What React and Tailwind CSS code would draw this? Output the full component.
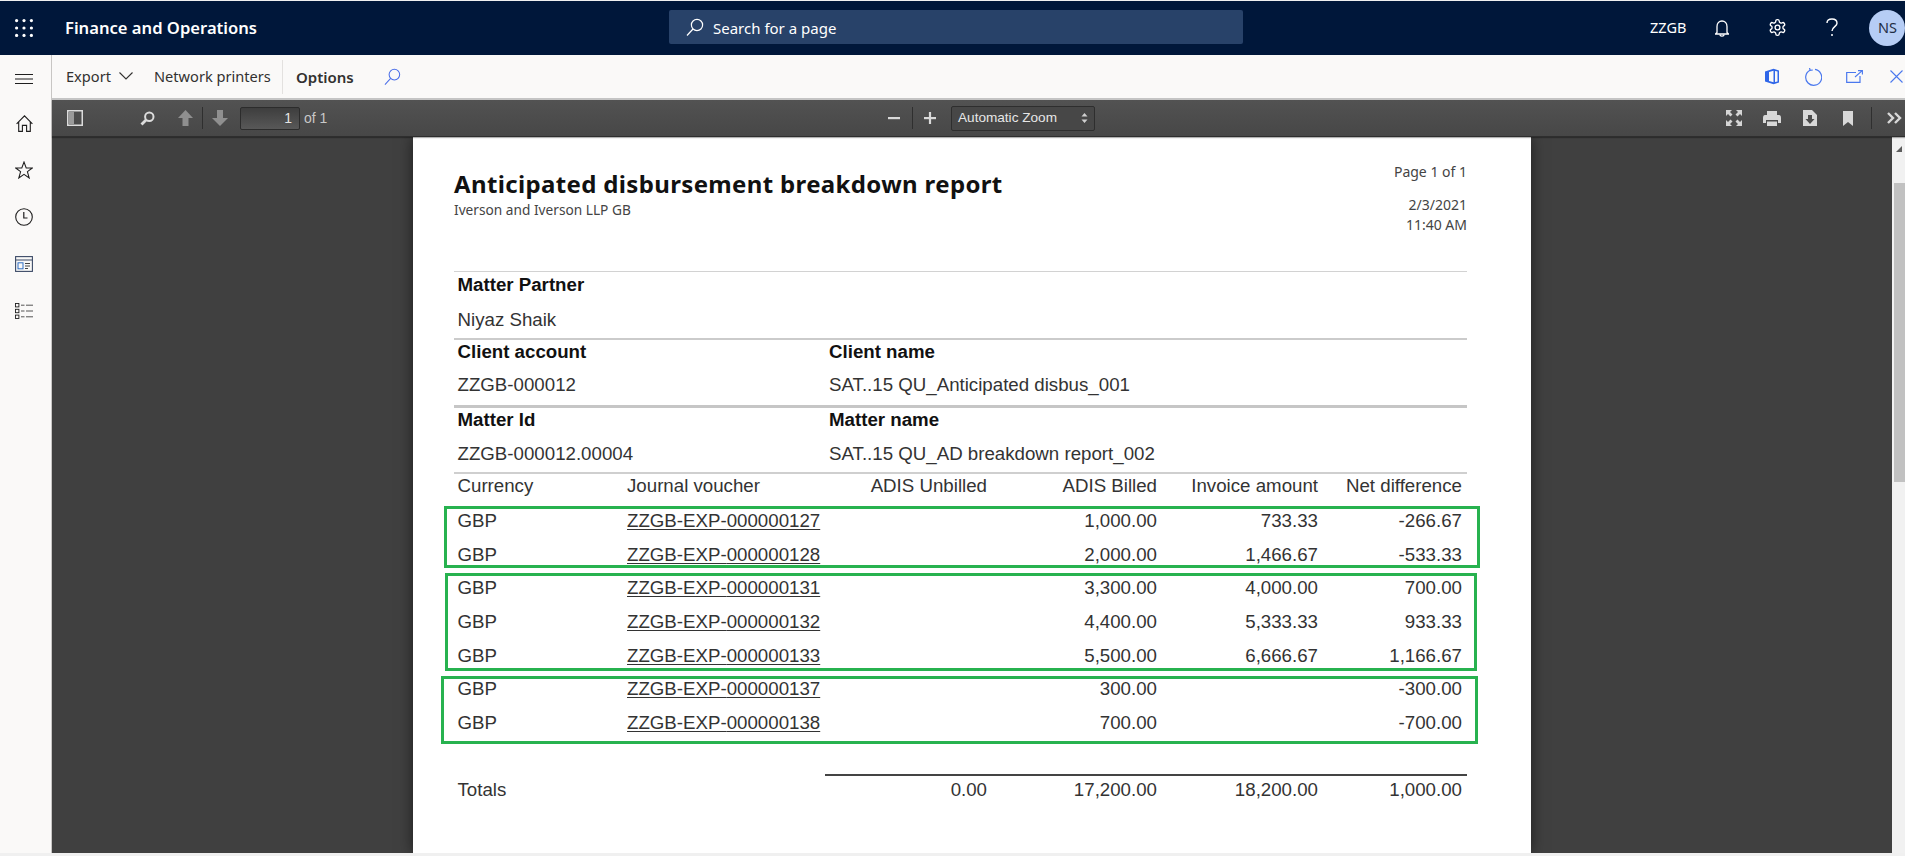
import React from "react";

const segoe = "[font-family:'Noto_Sans','Open_Sans',sans-serif]";

function Svg({ w, h, vb, className = "", children }) {
  return (
    <svg width={w} height={h} viewBox={vb || `0 0 ${w} ${h}`} fill="none" stroke="currentColor" className={"shrink-0 " + className}>
      {children}
    </svg>
  );
}

const SearchMirror = ({ w = 18, h = 18, sw = 1.3 }) => (
  <Svg w={w} h={h} vb="0 0 18 18">
    <circle cx="11" cy="7" r="5.6" strokeWidth={sw} />
    <path d="M7 11 L1 17.5" strokeWidth={sw} />
  </Svg>
);

function PdfBtn({ children, className = "" }) {
  return <div className={"shrink-0 flex items-center justify-center text-[#d9d9d9] " + className}>{children}</div>;
}

const Sep = ({ className = "" }) => <div className={"w-px h-[22px] bg-[#2f2f2f] shrink-0 " + className} />;

const rows = [
  ["000000127", "1,000.00", "733.33", "-266.67"],
  ["000000128", "2,000.00", "1,466.67", "-533.33"],
  ["000000131", "3,300.00", "4,000.00", "700.00"],
  ["000000132", "4,400.00", "5,333.33", "933.33"],
  ["000000133", "5,500.00", "6,666.67", "1,166.67"],
  ["000000137", "300.00", "", "-300.00"],
  ["000000138", "700.00", "", "-700.00"],
];

const Cols = ({ children, className = "" }) => (
  <div className={"grid grid-cols-[169.5px_200px_160px_170px_161px_144px] items-center pl-[3.5px] pr-[4.7px] " + className}>{children}</div>
);

function InfoBlock({ a, b, c, d, line, labelH }) {
  return (
    <div className={"h-[67.3px] " + line}>
      <div className={"grid grid-cols-[371.5px_1fr] pl-[3.5px] items-center font-bold text-[#111] " + labelH}>
        <div>{a}</div>
        <div>{b}</div>
      </div>
      <div className="grid grid-cols-[371.5px_1fr] pl-[3.5px] h-[41px] items-center text-[#333]">
        <div>{c}</div>
        <div>{d}</div>
      </div>
    </div>
  );
}

function Report() {
  return (
    <div className="relative w-[1118px] h-[716px] bg-white shadow-[0_0_14px_rgba(0,0,0,0.55)] pl-[41px] pr-[64px] shrink-0">
      <div className={"flex justify-between h-[133.5px] " + segoe}>
        <div className="pt-[31px]">
          <div className="text-[24px] leading-[32px] font-bold text-[#111] tracking-[0.35px]">Anticipated disbursement breakdown report</div>
          <div className="text-[13.7px] leading-[18px] pt-[1px] text-[#444]">Iverson and Iverson LLP GB</div>
        </div>
        <div className="text-right text-[14px] leading-[20px] text-[#444] pt-[25px]">
          <div>Page 1 of 1</div>
          <div className="mt-[13px]">2/3/2021</div>
          <div>11:40 AM</div>
        </div>
      </div>

      <div className="text-[18.7px] font-['Liberation_Sans',Arial,sans-serif] leading-none">
        <InfoBlock line="border-t border-[#d2d2d2]" labelH="h-[28.5px]" a="Matter Partner" b="" c="Niyaz Shaik" />
        <InfoBlock line="border-t-2 border-[#cbcbcb]" labelH="h-[25.5px]" a="Client account" b="Client name" c="ZZGB-000012" d="SAT..15 QU_Anticipated disbus_001" />
        <InfoBlock line="border-t-[3px] border-[#c6c6c6]" labelH="h-[25.5px]" a="Matter Id" b="Matter name" c="ZZGB-000012.00004" d="SAT..15 QU_AD breakdown report_002" />

        <Cols className="border-t-2 border-[#cfcfcf] h-[32px] text-[#333] items-start pt-[3px]">
          <div>Currency</div>
          <div>Journal voucher</div>
          <div className="text-right">ADIS Unbilled</div>
          <div className="text-right">ADIS Billed</div>
          <div className="text-right">Invoice amount</div>
          <div className="text-right">Net difference</div>
        </Cols>

        {rows.map((r) => (
          <Cols key={r[0]} className="h-[33.7px] text-[#333]">
            <div>GBP</div>
            <div className="underline underline-offset-2">ZZGB-EXP-{r[0]}</div>
            <div />
            <div className="text-right">{r[1]}</div>
            <div className="text-right">{r[2]}</div>
            <div className="text-right">{r[3]}</div>
          </Cols>
        ))}

        <div className="ml-[370.6px] mt-[34px] h-[2px] bg-[#444]" />
        <Cols className="h-[28px] text-[#333]">
          <div>Totals</div>
          <div />
          <div className="text-right">0.00</div>
          <div className="text-right">17,200.00</div>
          <div className="text-right">18,200.00</div>
          <div className="text-right">1,000.00</div>
        </Cols>
      </div>

      <div className="absolute left-[30.6px] top-[369px] w-[1036.4px] h-[62px] border-[3px] border-[#27b24f]" />
      <div className="absolute left-[32px] top-[436.3px] w-[1032px] h-[97.7px] border-[3px] border-[#27b24f]" />
      <div className="absolute left-[28px] top-[539.3px] w-[1037px] h-[67.7px] border-[3px] border-[#27b24f]" />
    </div>
  );
}

function RailSlot({ children, className = "" }) {
  return <div className={"h-[47px] w-full flex items-center justify-center shrink-0 " + className}>{children}</div>;
}

export default function App() {
  return (
    <div className="w-[1914px] h-[856px] bg-white overflow-hidden">
      <div className="w-[1905px] h-full pt-px flex flex-col bg-[#f0f0f0] overflow-hidden">
        {/* Top bar */}
        <header className={"h-[54px] shrink-0 bg-[#00173a] flex items-center text-white " + segoe}>
          <svg width="18" height="18" viewBox="0 0 18 18" fill="currentColor" className="ml-[15px] shrink-0 -mt-[1px]">
            {[1.6, 9, 16.4].flatMap((y) => [1.6, 9, 16.4].map((x) => <circle key={x + "-" + y} cx={x} cy={y} r="1.6" />))}
          </svg>
          <div className="w-[604px] ml-[32px] shrink-0 text-[16.6px] font-semibold">Finance and Operations</div>
          <div className="w-[574px] h-[34px] shrink-0 bg-[#284269] rounded-[2px] flex items-center pl-[17px] gap-[9px] text-[15px] -mt-[2px]">
            <SearchMirror w={18} h={18} sw={1.2} />
            <span className="pt-[2px]">Search for a page</span>
          </div>
          <div className="ml-[407px] text-[14.5px] w-[38px]">ZZGB</div>
          <Svg w={14} h={17} vb="0 0 14 17" className="ml-[29px]">
            <path d="M2 12.5 V6.5 C2 3.3 4.2 1 7 1 C9.8 1 12 3.3 12 6.5 V12.5 L13.5 14 H0.5 Z" strokeWidth="1.3" />
            <path d="M5 14.5 C5 16.6 9 16.6 9 14.5" strokeWidth="1.3" />
          </Svg>
          <Svg w={19} h={19} vb="0 0 24 24" className="ml-[39px] -mt-[1px]">
            <path d="M12.22 2h-.44a2 2 0 0 0-2 2v.18a2 2 0 0 1-1 1.73l-.43.25a2 2 0 0 1-2 0l-.15-.08a2 2 0 0 0-2.73.73l-.22.38a2 2 0 0 0 .73 2.73l.15.1a2 2 0 0 1 1 1.72v.51a2 2 0 0 1-1 1.74l-.15.09a2 2 0 0 0-.73 2.73l.22.38a2 2 0 0 0 2.73.73l.15-.08a2 2 0 0 1 2 0l.43.25a2 2 0 0 1 1 1.73V20a2 2 0 0 0 2 2h.44a2 2 0 0 0 2-2v-.18a2 2 0 0 1 1-1.73l.43-.25a2 2 0 0 1 2 0l.15.08a2 2 0 0 0 2.73-.73l.22-.39a2 2 0 0 0-.73-2.73l-.15-.08a2 2 0 0 1-1-1.74v-.5a2 2 0 0 1 1-1.74l.15-.09a2 2 0 0 0 .73-2.73l-.22-.38a2 2 0 0 0-2.73-.73l-.15.08a2 2 0 0 1-2 0l-.43-.25a2 2 0 0 1-1-1.73V4a2 2 0 0 0-2-2z" strokeWidth="1.7" />
            <circle cx="12" cy="12" r="3" strokeWidth="1.7" />
          </Svg>
          <Svg w={12} h={19} vb="0 0 12 19" className="ml-[39px] -mt-[1px]">
            <path d="M1 5 C1 2.4 3 1 6 1 C9 1 11 2.8 11 5.2 C11 8.5 6 8.8 6 13" strokeWidth="1.4" />
            <circle cx="6" cy="17" r="1" fill="currentColor" stroke="none" />
          </Svg>
          <div className="ml-[31px] w-[36px] h-[36px] shrink-0 rounded-full bg-[#b6cdf5] text-[#1f2d44] text-[14.5px] flex items-center justify-center">NS</div>
        </header>

        <div className="flex-1 flex min-h-0">
          {/* Nav rail */}
          <nav className="w-[52px] shrink-0 bg-[#faf9f8] border-r border-[#c8c6c4] text-[#1f1f1f] flex flex-col items-center pr-[3px]">
            <RailSlot>
              <Svg w={18} h={10} vb="0 0 18 10"><path d="M0 0.5 H18 M0 5 H18 M0 9.5 H18" strokeWidth="1" /></Svg>
            </RailSlot>
            <RailSlot className="-mt-[2px]">
              <Svg w={17} h={17} vb="0 0 17 17">
                <path d="M0.6 8.8 L8.5 0.8 L16.4 8.8 M2.7 7 V16.4 H6.4 V10.4 H10.6 V16.4 H14.3 V7" strokeWidth="1.1" />
              </Svg>
            </RailSlot>
            <RailSlot className="-mt-[1px]">
              <Svg w={18} h={18} vb="0 0 18 18">
                <path d="M9 1 L11.2 7 H17.3 L12.4 10.7 L14.2 17 L9 13.3 L3.8 17 L5.6 10.7 L0.7 7 H6.8 Z" strokeWidth="1.05" />
              </Svg>
            </RailSlot>
            <RailSlot>
              <Svg w={18} h={18} vb="0 0 18 18">
                <circle cx="9" cy="9" r="8.3" strokeWidth="1.1" />
                <path d="M8.8 4 V10 H12.5" strokeWidth="1.2" />
              </Svg>
            </RailSlot>
            <RailSlot>
              <Svg w={18} h={16} vb="0 0 18 16">
                <rect x="0.6" y="0.6" width="16.8" height="14.8" strokeWidth="1.1" stroke="#3b4a66" />
                <path d="M0.6 4 H17.4" strokeWidth="1" stroke="#3b4a66" />
                <rect x="3" y="6.8" width="5" height="6" strokeWidth="1" stroke="#2f6fc4" />
                <path d="M10 7.5 H15 M10 10 H15 M10 12.5 H13" strokeWidth="1" stroke="#444" />
              </Svg>
            </RailSlot>
            <RailSlot>
              <Svg w={18} h={16} vb="0 0 18 16">
                <rect x="0.5" y="0.5" width="3.4" height="3.4" strokeWidth="0.9" />
                <rect x="0.5" y="6.3" width="3.4" height="3.4" strokeWidth="0.9" />
                <rect x="0.5" y="12.1" width="3.4" height="3.4" strokeWidth="0.9" />
                <path d="M6 2.2 H9.5 M11 2.2 H18 M6 8 H9.5 M11 8 H18 M6 13.8 H9.5 M11 13.8 H18" strokeWidth="1" stroke="#555" />
              </Svg>
            </RailSlot>
          </nav>

          <div className="flex-1 min-w-0 flex flex-col">
            {/* Command bar */}
            <div className={"h-[45px] shrink-0 bg-[#faf9f8] flex items-center text-[#323130] text-[14.6px] border-b-2 border-[#c4c4c4] " + segoe}>
              <div className="ml-[14px] flex items-center w-[88px]">
                <span className="pt-[1px]">Export</span>
                <Svg w={14} h={8} vb="0 0 14 8" className="ml-[8px]">
                  <path d="M0.5 0.5 L7 7 L13.5 0.5" strokeWidth="1.1" />
                </Svg>
              </div>
              <span className="w-[128px] shrink-0 pt-[1px]">Network printers</span>
              <div className="w-px h-[34px] bg-[#e3e1df]" />
              <span className="ml-[13px] font-semibold w-[88px] shrink-0 pt-[1px] text-[15px]">Options</span>
              <span className="text-[#4a6ee8]"><SearchMirror w={17} h={17} sw={1.1} /></span>
              <div className="ml-auto flex items-center text-[#4a78ee] pr-[2px]">
                <Svg w={16} h={17} vb="0 0 16 17">
                  <path d="M1 3.5 L9.5 0.8 L15 2.5 V14.5 L9.5 16.2 L1 13.5 Z" fill="#2f66e8" stroke="none" />
                  <path d="M5 4 L9.5 2.8 V14.2 L5 13 Z" fill="#faf9f8" stroke="none" />
                  <path d="M11 3 L13.5 3.6 V13.4 L11 14 Z" fill="#faf9f8" stroke="none" />
                </Svg>
                <Svg w={18} h={18} vb="0 0 18 18" className="ml-[24px]">
                  <path d="M6 2.2 A8 8 0 1 0 11 1.4" strokeWidth="1.2" />
                  <path d="M5.5 0 L6.2 2.4 L8.8 2" strokeWidth="1.2" />
                </Svg>
                <Svg w={17} h={13} vb="0 0 17 13" className="ml-[24px]">
                  <path d="M10 2.5 H0.7 V12.3 H14 V6" strokeWidth="1.2" />
                  <path d="M9 7 L16 0.8 M12 0.6 H16.4 V4.5" strokeWidth="1.1" />
                </Svg>
                <Svg w={13} h={13} vb="0 0 13 13" className="ml-[27px]">
                  <path d="M0.5 0.5 L12.5 12.5 M12.5 0.5 L0.5 12.5" strokeWidth="1.1" />
                </Svg>
              </div>
            </div>

            {/* PDF viewer */}
            <main className="flex-1 flex flex-col min-h-0 font-['Liberation_Sans',Arial,sans-serif]">
              <div className="h-[37px] shrink-0 bg-linear-to-b from-[#525252] to-[#474747] border-b border-[#2e2e2e] flex items-center text-[#d9d9d9] text-[14px] shadow-[0_1px_1px_rgba(0,0,0,0.3)] relative z-10">
                <div className="w-[836px] shrink-0 flex items-center pl-[15px]">
                  <PdfBtn>
                    <svg width="16" height="16" viewBox="0 0 16 16"><rect x="0.75" y="0.75" width="14.5" height="14.5" fill="none" stroke="#dcdcdc" strokeWidth="1.5" /><rect x="2" y="2" width="5" height="12" fill="#9a9a9a" /></svg>
                  </PdfBtn>
                  <PdfBtn className="ml-[57px]">
                    <svg width="15" height="15" viewBox="0 0 15 15" fill="none" stroke="#dcdcdc"><circle cx="9.3" cy="5.7" r="4.2" strokeWidth="2" /><path d="M6 9 L1.5 13.5" strokeWidth="2.8" /></svg>
                  </PdfBtn>
                  <PdfBtn className="ml-[23px]">
                    <svg width="15" height="16" viewBox="0 0 15 16" fill="#8f8f8f"><path d="M7.5 0 L15 8 H10.5 V16 H4.5 V8 H0 Z" /></svg>
                  </PdfBtn>
                  <Sep className="ml-[9px]" />
                  <PdfBtn className="ml-[9px]">
                    <svg width="16" height="16" viewBox="0 0 16 16" fill="#8f8f8f"><path d="M8 16 L0 8 H5 V0 H11 V8 H16 Z" /></svg>
                  </PdfBtn>
                  <div className="ml-[12px] w-[60px] h-[23px] rounded-[2px] bg-linear-to-b from-[#3e3e3e] to-[#585858] border border-[#2c2c2c] text-right pr-[7px] leading-[21px] text-[#e4e4e4]">1</div>
                  <span className="ml-[4px] text-[#c8c8c8]">of 1</span>
                </div>
                <div className="flex items-center">
                  <svg width="12" height="16" viewBox="0 0 12 16" fill="#d9d9d9"><rect y="7" width="12" height="2.2" /></svg>
                  <Sep className="ml-[12px]" />
                  <svg width="12" height="16" viewBox="0 0 12 16" fill="#d9d9d9" className="ml-[11px]"><rect y="7" width="12" height="2.2" /><rect x="4.9" y="2" width="2.2" height="12" /></svg>
                  <div className="ml-[15px] w-[144px] h-[25px] rounded-[2px] bg-[#474747] border border-[#2e2e2e] flex items-center pl-[6px] text-[13.6px] text-[#e6e6e6]">
                    <span>Automatic Zoom</span>
                    <svg width="7" height="12" viewBox="0 0 7 12" fill="#cfcfcf" className="ml-auto mr-[6px]"><path d="M3.5 1 L6.5 4.5 H0.5 Z M3.5 11 L0.5 7.5 H6.5 Z" /></svg>
                  </div>
                </div>
                <div className="ml-auto flex items-center pr-[2px]">
                  <svg width="16" height="16" viewBox="0 0 16 16" fill="#d5d5d5"><path d="M0 0 H6 L4 2 L6.5 4.5 L4.5 6.5 L2 4 L0 6 Z M16 0 V6 L14 4 L11.5 6.5 L9.5 4.5 L12 2 L10 0 Z M0 16 V10 L2 12 L4.5 9.5 L6.5 11.5 L4 14 L6 16 Z M16 16 H10 L12 14 L9.5 11.5 L11.5 9.5 L14 12 L16 10 Z" /></svg>
                  <svg width="18" height="15" viewBox="0 0 18 15" fill="#d8d8d8" className="ml-[21px]"><path d="M4 0 H14 V4 H16 Q18 4 18 7 V12 H15 V9 H3 V12 H0 V7 Q0 4 2 4 H4 Z" /><rect x="4" y="10.5" width="10" height="4.5" /></svg>
                  <svg width="14" height="16" viewBox="0 0 14 16" fill="#d8d8d8" className="ml-[22px]"><path d="M0 0 H9 L14 5 V16 H0 Z" /><path d="M5 5 H9 V9 H11.5 L7 14 L2.5 9 H5 Z" fill="#4c4c4c" /></svg>
                  <svg width="10" height="15" viewBox="0 0 10 15" fill="#d8d8d8" className="ml-[26px]"><path d="M0 0 H10 V15 L5 11 L0 15 Z" /></svg>
                  <Sep className="ml-[18px]" />
                  <svg width="16" height="12" viewBox="0 0 16 12" fill="none" stroke="#d8d8d8" strokeWidth="2.4" className="ml-[15px]"><path d="M1 1 L6 6 L1 11 M8 1 L13 6 L8 11" /></svg>
                </div>
              </div>

              <div className="flex-1 flex min-h-0">
                <div className="flex-1 bg-[#404040] flex justify-center overflow-hidden">
                  <Report />
                </div>
                <div className="w-[13px] shrink-0 bg-[#f1f1f1] flex flex-col items-end">
                  <div className="h-[46px] w-full flex items-start justify-center pt-[9px]">
                    <div className="w-0 h-0 border-l-[6px] border-b-[6px] border-l-transparent border-b-[#5c5c5c]" />
                  </div>
                  <div className="w-[11px] h-[299px] bg-[#c1c1c1]" />
                </div>
              </div>
            </main>
          </div>
        </div>
        <div className="h-[3px] shrink-0" />
      </div>
    </div>
  );
}
